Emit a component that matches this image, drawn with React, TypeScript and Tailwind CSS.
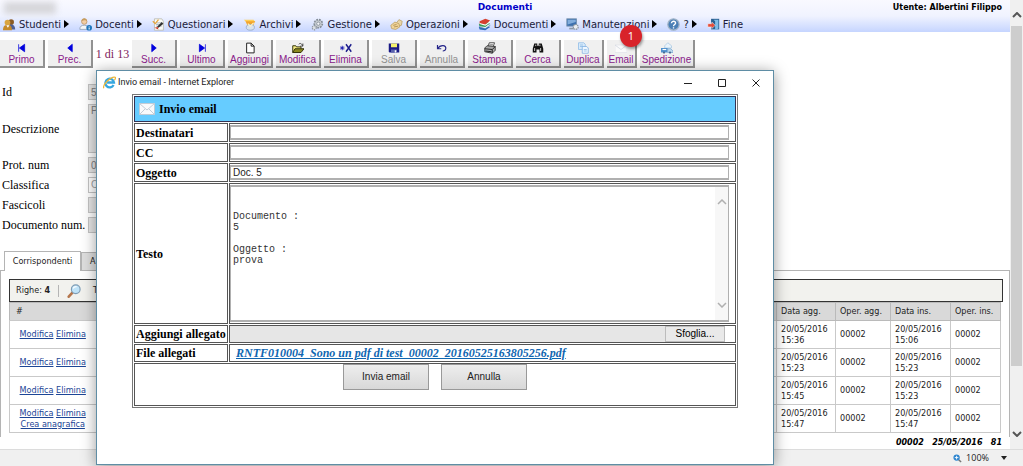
import type { ReactNode } from "react";

const menuItems: { label: string; icon: ReactNode; arrow?: boolean }[] = [
  {
    label: "Studenti",
    arrow: true,
    icon: (
      <>
        <circle cx="10" cy="5" r="3.5" fill="#8a5a24" />
        <path d="M5 14c0-5 2-6 5-6s5 2 5 6z" fill="#4d5f96" />
        <circle cx="5.500" cy="5.500" r="3.500" fill="#d9a441" />
        <path d="M0 15c0-5 2-6.500 5.500-6.500S11 10 11 15z" fill="#c58a2c" />
        <path d="M4 9l2 3 2-3z" fill="#fff" />
      </>
    ),
  },
  {
    label: "Docenti",
    arrow: true,
    icon: (
      <>
        <path d="M1 14c0-4 2-5 5.500-5s5 1 5 5z" fill="#f4f6f8" stroke="#8d9fb5" />
        <circle cx="6.500" cy="4.500" r="3.300" fill="#f3cda2" stroke="#b9946a" />
        <path d="M3 4c0-5 7-5 7 0-2-2-5-1-7 0z" fill="#c79d5e" />
        <circle cx="12.500" cy="12" r="3.500" fill="#1c75bc" />
        <path d="M12.500 10v.8M12.500 11.600V14" stroke="#fff" strokeWidth="1.300" />
      </>
    ),
  },
  {
    label: "Questionari",
    arrow: true,
    icon: (
      <>
        <path d="M3 1h9l2 3v11H3z" fill="#fbfbf6" stroke="#b8b8ae" />
        <path d="M5 6h7M5 8h6M5 10h7" stroke="#9daab9" />
        <path d="M1 4l3 3 4-5" stroke="#e6a43b" strokeWidth="1.500" fill="none" />
        <path d="M6 11l6-6 2 2-6 5z" fill="#313131" />
        <path d="M3 12l4-1 1 3z" fill="#d03928" />
      </>
    ),
  },
  {
    label: "Archivi",
    arrow: true,
    icon: (
      <>
        <path d="M1 2h12l2 3H4z" fill="#ffcf55" />
        <path d="M3 4h12l-3 6H6z" fill="#f2a52e" />
        <ellipse cx="9" cy="11.500" rx="5" ry="3.500" fill="#d9e3ef" stroke="#8fa8c5" />
        <path d="M6 7l3 3 4-4" stroke="#fff3c2" strokeWidth="1.500" fill="none" />
      </>
    ),
  },
  {
    label: "Gestione",
    arrow: true,
    icon: (
      <>
        <circle cx="9" cy="7" r="5" fill="#c6ccd2" stroke="#838c96" strokeWidth="2" strokeDasharray="2.200 1.200" />
        <circle cx="9" cy="7" r="2" fill="#f4f6fa" stroke="#838c96" />
        <circle cx="4" cy="12" r="2.500" fill="#dce0e4" stroke="#8e969f" strokeWidth="1.500" strokeDasharray="1.500 1" />
      </>
    ),
  },
  {
    label: "Operazioni",
    arrow: true,
    icon: (
      <>
        <path d="M8 6l3-4 4 2-1 5-4 1z" fill="#e8d5a8" stroke="#bca269" />
        <path d="M1 9l5-4 5 2 1 4-5 3-5-1z" fill="#f0d49a" stroke="#bfa063" />
        <path d="M4 9l4-1M5 11l5-1" stroke="#a9894a" />
      </>
    ),
  },
  {
    label: "Documenti",
    arrow: true,
    icon: (
      <>
        <path d="M1 11l8-2 6 2-6 4-7-1z" fill="#2f69b5" />
        <path d="M2 9l8-2 5 2-6 4-7-2z" fill="#eef3f9" stroke="#4a7fb8" strokeWidth=".6" />
        <path d="M1 7l9-2 5 1-6 5-7-1z" fill="#3c9b57" />
        <path d="M2 4l7-3 6 2-6 5-7-1z" fill="#d6402f" />
        <path d="M2 6l7 2 6-4v1.500L9 9.500 2 7.500z" fill="#fff" />
      </>
    ),
  },
  {
    label: "Manutenzioni",
    arrow: true,
    icon: (
      <>
        <rect x="1" y="1" width="12" height="9" fill="#3d70ae" stroke="#7892ae" />
        <path d="M2 2h10v3L2 8z" fill="#82addc" />
        <path d="M4 12h6v2H4z" fill="#8b98a5" />
        <circle cx="12" cy="11" r="3" fill="#eceff2" stroke="#8c959e" strokeWidth="1.500" strokeDasharray="1.800 .8" />
      </>
    ),
  },
  {
    label: "?",
    arrow: true,
    icon: (
      <>
        <circle cx="8" cy="8" r="7" fill="#4a7fb5" stroke="#a3b5c8" strokeWidth="1.500" />
        <path d="M5.500 6.500c0-3.500 5.500-3.300 5 0-.3 1.500-2.500 1.500-2.500 3.500M8 11.500V13" stroke="#fff" strokeWidth="1.700" fill="none" />
      </>
    ),
  },
  {
    label: "Fine",
    icon: (
      <>
        <rect x="5" y="1" width="10" height="13" fill="#2b6091" />
        <path d="M8 2h6v11l-4 2V4z" fill="#7ebde8" />
        <path d="M1 7h5V5l4 4-4 4v-2H1z" fill="#e34b37" stroke="#fff" strokeWidth=".6" />
      </>
    ),
  },
];

interface ToolButton {
  label: string;
  width: string;
  icon: ReactNode;
  disabled?: boolean;
}

const navBefore: ToolButton[] = [
  { label: "Primo", width: "w-[45px]", icon: <path d="M3.500 3v10M4.500 8l7-5v10z" fill="#00d" stroke="#00d" /> },
  { label: "Prec.", width: "w-[45px]", icon: <path d="M5 8l6-5v10z" fill="#00d" stroke="#00d" /> },
];

const navAfter: ToolButton[] = [
  { label: "Succ.", width: "w-[45px]", icon: <path d="M11 8L5 3v10z" fill="#00d" stroke="#00d" /> },
  { label: "Ultimo", width: "w-[45px]", icon: <path d="M12.500 3v10M11.500 8l-7-5v10z" fill="#00d" stroke="#00d" /> },
  {
    label: "Aggiungi",
    width: "w-[45px]",
    icon: <path d="M3.500 1.500h6l4 4v9h-10zM9.500 1.500v4h4" fill="#fff" stroke="#222" strokeWidth="1.300" />,
  },
  {
    label: "Modifica",
    width: "w-[45px]",
    icon: (
      <>
        <path d="M1 14V5h4l1 1.500h6V9" fill="#f4eb84" stroke="#333308" strokeWidth="1.300" />
        <path d="M1 14l3-5h12l-4 5z" fill="#8c8a20" stroke="#333308" strokeWidth="1.300" />
        <path d="M9 3c2-2 4-1 5 2M14.500 2v3.500H11" fill="none" stroke="#222" />
      </>
    ),
  },
  {
    label: "Elimina",
    width: "w-[45px]",
    icon: (
      <>
        <path d="M0 8h6M3 5v6M1 6l4 4M5 6l-4 4" stroke="#1a1ab0" strokeWidth="1.200" />
        <path d="M8 3l7 10M15 3L8 13" stroke="#1a1a8a" strokeWidth="1.900" />
      </>
    ),
  },
  {
    label: "Salva",
    width: "w-[45px]",
    disabled: true,
    icon: (
      <>
        <path d="M1 2h14v12H2l-1-1z" fill="#191985" />
        <path d="M4 2h8v5H4z" fill="#f2ef6d" />
        <path d="M4 10h8v4H4z" fill="#5a62ae" />
        <path d="M9 11h2v3H9z" fill="#fff" />
      </>
    ),
  },
  {
    label: "Annulla",
    width: "w-[45px]",
    disabled: true,
    icon: <path d="M2 4v5h5M2 9c4-6 12-5 11 0-.3 2-2 3-4 3" fill="none" stroke="#26268a" strokeWidth="1.600" />,
  },
  {
    label: "Stampa",
    width: "w-[45px]",
    icon: (
      <>
        <path d="M5 7l2-6h7l-2 6z" fill="#fff" stroke="#222" />
        <path d="M1 8l3-3 11 1v5l-4 4-10-2z" fill="#aaa" stroke="#222" />
        <path d="M1 9l10 1 4-4M2 12l8 1M11 10v5" fill="none" stroke="#222" strokeWidth="1.300" />
        <path d="M7 3l5 .5M6 5l6 .5" stroke="#555" strokeWidth=".8" />
      </>
    ),
  },
  {
    label: "Cerca",
    width: "w-[45px]",
    icon: (
      <>
        <path d="M3 2h4v3h2V2h4l2 7v5h-5v-4H6v4H1V9z" fill="#111" />
        <path d="M3.500 8v4M11.500 8v4M5 3.500v2M10.500 3.500v2" stroke="#fff" />
      </>
    ),
  },
  {
    label: "Duplica",
    width: "w-10",
    icon: (
      <>
        <path d="M2 1h7l2 2v7H2z" fill="#d8eafa" stroke="#8cb9e6" />
        <path d="M7 6h6l2 2v7H7z" fill="#eef7ff" stroke="#7eade0" />
        <path d="M4 4h4M4 6h4M9 10h4M9 12h4" stroke="#8cb9e6" />
      </>
    ),
  },
  {
    label: "Email",
    width: "w-[30px]",
    icon: (
      <>
        <path d="M0 4h16v10H0z" fill="#fafafa" stroke="#e1e3ea" />
        <path d="M0 4l8 6 8-6" fill="none" stroke="#d0d5df" />
      </>
    ),
  },
  {
    label: "Spedizione",
    width: "w-[55px]",
    icon: (
      <>
        <path d="M5 5l4-4 5 4v3H5z" fill="#e9f3fb" stroke="#a9c8e2" />
        <path d="M0 8h9v6H0z" fill="#4f91ce" />
        <path d="M9 9h4l3 3v2H9z" fill="#bdd9ef" stroke="#7daad0" />
        <path d="M2 10h5" stroke="#fff" strokeWidth="1.500" />
        <circle cx="4" cy="14" r="1.500" fill="#466f94" />
        <circle cx="12" cy="14" r="1.500" fill="#466f94" />
      </>
    ),
  },
];

const rows = [
  { agg: "20/05/2016 15:36", ins: "20/05/2016 15:06" },
  { agg: "20/05/2016 15:23", ins: "20/05/2016 15:23" },
  { agg: "20/05/2016 15:45", ins: "20/05/2016 15:23" },
  { agg: "20/05/2016 15:47", ins: "20/05/2016 15:47", crea: true },
];

const Toolbutton = ({ label, width, icon, disabled }: ToolButton) => (
  <button
    type="button"
    disabled={disabled}
    className={`${width} flex h-7 shrink-0 flex-col items-center justify-end whitespace-nowrap border-r-2 border-b-2 border-[#929292] bg-[#f0f0f0] pb-px text-[10px] leading-[10px] ${
      disabled ? "text-[#939393]" : "text-[#8b1a8b]"
    }`}
  >
    <svg viewBox="0 0 16 16" className="mb-px h-3 w-3" fill="none">
      {icon}
    </svg>
    {label}
  </button>
);

const Header = () => (
  <header className="h-8 bg-linear-to-b from-[#f9f9ff] via-[#f0f3ff] to-[#c6d5ff] font-['DejaVu_Sans',Verdana,sans-serif]">
    <div className="grid h-4 grid-cols-3 items-center text-[9px] font-bold">
      <span className="ml-1 h-3 w-13 bg-[#d6d6da] blur-[3px]" />
      <h1 className="text-center text-[#0000c8]">Documenti</h1>
      <span className="pr-2 text-right text-[8px]">Utente: Albertini Filippo</span>
    </div>
    <nav className="flex h-4 items-center gap-[10px] pl-[3px] text-[10px] text-[#1b1b3a]">
      {menuItems.map((item) => (
        <a key={item.label} href="#" className="flex shrink-0 items-center gap-[3px]">
          <svg viewBox="0 0 16 16" className="h-[13px] w-[13px]" fill="none">
            {item.icon}
          </svg>
          {item.label}
          {item.arrow && (
            <svg viewBox="0 0 5 8" className="h-2 w-[5px]">
              <path d="M0 0l5 4-5 4z" fill="#000" />
            </svg>
          )}
        </a>
      ))}
    </nav>
  </header>
);

const Toolbar = () => (
  <div className="mt-2 flex items-center gap-[3px] font-['Liberation_Sans',Arial,sans-serif]">
    {navBefore.map((b) => (
      <Toolbutton key={b.label} {...b} />
    ))}
    <span className="flex w-[33px] shrink-0 justify-center font-['Liberation_Serif',serif] text-xs whitespace-nowrap text-[#7d1a5a]">
      1 di 13
    </span>
    {navAfter.map((b) => (
      <Toolbutton key={b.label} {...b} />
    ))}
  </div>
);

const fieldClass =
  "w-64 border border-[#c4c4c4] bg-[#e6e6e6] px-0.5 font-['Liberation_Sans',Arial,sans-serif] text-[10px] leading-3 text-[#7d7d7d]";

const DocumentForm = () => (
  <form className="mt-4 grid grid-cols-[86px_1fr] items-center gap-y-1 pl-0.5 font-['Liberation_Serif',serif] text-xs leading-4">
    <label htmlFor="id">Id</label>
    <input id="id" readOnly defaultValue="5" className={`${fieldClass} h-4`} />
    <label htmlFor="descrizione">Descrizione</label>
    <textarea id="descrizione" readOnly defaultValue="P" className={`${fieldClass} h-[49px] resize-none`} />
    <label htmlFor="prot">Prot. num</label>
    <input id="prot" readOnly defaultValue="0" className={`${fieldClass} h-4`} />
    <label htmlFor="classifica">Classifica</label>
    <select
      id="classifica"
      className="h-4 w-64 appearance-none border border-[#c4c4c4] bg-white px-0.5 font-['Liberation_Sans',Arial,sans-serif] text-[10px] leading-3 text-[#a0a0a0]"
    >
      <option>C</option>
    </select>
    <label htmlFor="fascicoli">Fascicoli</label>
    <input id="fascicoli" readOnly className={`${fieldClass} h-4`} />
    <label htmlFor="docnum">Documento num.</label>
    <input id="docnum" readOnly className={`${fieldClass} h-4`} />
  </form>
);

const Correspondents = () => (
  <section className="mt-[18px] font-['DejaVu_Sans_Condensed',Tahoma,'Noto_Sans',sans-serif] text-[9px] leading-[11px] text-[#222]">
    <div className="flex items-end pl-1">
      <button type="button" className="relative -mb-px h-5 w-[77px] border border-b-0 border-[#b4b4b4] bg-white">
        Corrispondenti
      </button>
      <button type="button" className="h-[18px] w-[77px] border border-b-0 border-[#b4b4b4] bg-[#dedede] pl-2 text-left">
        A
      </button>
    </div>
    <div className="border border-b-0 border-[#b4b4b4] px-2 pt-2 pb-1">
      <div className="mr-[-2px] flex h-[23px] items-center border border-[#333] bg-[#f2f2ee] pl-1.5">
        <span>
          Righe: <b>4</b>
        </span>
        <span className="ml-2 h-3 w-px bg-[#b5b5b5]" />
        <svg viewBox="0 0 16 16" className="ml-2 h-[14px] w-[14px]" fill="none">
          <path d="M7 9l-5 5.500" stroke="#b5764c" strokeWidth="3" strokeLinecap="round" />
          <circle cx="10" cy="6" r="5" fill="#bfe3f8" stroke="#7e9cb4" strokeWidth="1.300" />
          <path d="M7 5c1-2 3-2 4-2" stroke="#fff" strokeWidth="1.300" />
        </svg>
        <span className="ml-3">T</span>
      </div>
      <table className="w-full table-fixed border-collapse border border-[#b8b8b8]">
        <thead>
          <tr className="h-[18px] bg-[#d9d9d9] text-left">
            <th className="w-[86px] pl-1.5 font-normal">#</th>
            <th />
            <th className="w-[59px] border border-[#bababa] pl-1 font-normal">Data agg.</th>
            <th className="w-[55px] border border-[#bababa] pl-1 font-normal">Oper. agg.</th>
            <th className="w-[60px] border border-[#bababa] pl-1 font-normal">Data ins.</th>
            <th className="w-[50px] border border-[#bababa] pl-1 font-normal whitespace-nowrap">Oper. ins.</th>
          </tr>
        </thead>
        <tbody>
          {rows.map((row) => (
            <tr key={row.agg} className="h-7 border border-[#c9c9c9]">
              <td className="text-center text-[#1c4596]">
                <a href="#" className="underline">Modifica</a>{" "}
                <a href="#" className="underline">Elimina</a>
                {row.crea && (
                  <a href="#" className="block underline">Crea anagrafica</a>
                )}
              </td>
              <td />
              <td className="border border-[#c9c9c9] pl-1">{row.agg}</td>
              <td className="border border-[#c9c9c9] pl-1">00002</td>
              <td className="border border-[#c9c9c9] pl-1">{row.ins}</td>
              <td className="border border-[#c9c9c9] pl-1">00002</td>
            </tr>
          ))}
        </tbody>
      </table>
    </div>
  </section>
);

const labelCell = "w-[94px] border border-[#555] px-px text-left align-middle font-bold whitespace-nowrap";
const valueCell = "border border-[#555] py-px pr-1.5";
const mailInput =
  "block h-[15px] w-full border border-y-2 border-[#b0b0b0] bg-white px-0.5 font-['Liberation_Sans',Arial,sans-serif] text-[10px] leading-[11px] text-[#222]";

const message = "\n\nDocumento :\n5\n\nOggetto :\nprova";

const EmailWindow = () => (
  <div
    role="dialog"
    aria-label="Invio email"
    className="absolute top-[70px] right-[249px] bottom-px left-24 border border-[#5f8da5] bg-white shadow-[0_2px_14px_rgba(0,0,0,0.4)]"
  >
    <div className="flex h-[23px] items-center pl-1.5">
      <svg viewBox="0 0 16 16" className="h-[13px] w-[13px]" fill="none">
        <path d="M13 11a5.300 5.300 0 1 1 .5-3H5" stroke="#36a7df" strokeWidth="2.800" />
        <path d="M1 15C-1 11 10 0 15 1.500c1 .7 0 2.500-1 3.500" stroke="#edb63a" strokeWidth="1.500" />
      </svg>
      <span className="ml-0.5 font-[Roboto,'Segoe_UI',sans-serif] text-[9px] text-[#222]">
        Invio email - Internet Explorer
      </span>
      <div className="mr-3 ml-auto flex gap-6">
        <button type="button" aria-label="Minimize">
          <svg viewBox="0 0 10 10" className="h-[10px] w-[10px]"><path d="M1 5.500h8" stroke="#222" /></svg>
        </button>
        <button type="button" aria-label="Maximize">
          <svg viewBox="0 0 10 10" className="h-[10px] w-[10px]"><path d="M1.500 1.500h7v7h-7z" fill="none" stroke="#222" /></svg>
        </button>
        <button type="button" aria-label="Close">
          <svg viewBox="0 0 10 10" className="h-[10px] w-[10px]"><path d="M1.500 1.500l7 7M8.500 1.500l-7 7" stroke="#222" /></svg>
        </button>
      </div>
    </div>
    <form className="px-[35px] font-['Liberation_Serif',serif] text-xs leading-[14px] text-black">
      <table className="w-full border-separate border-spacing-px border border-[#777]">
        <thead>
          <tr>
            <th colSpan={2} className="h-[26px] border border-[#335] bg-[#66ccff] px-1 text-left">
              <span className="flex items-center gap-1">
                <svg viewBox="0 0 16 12" className="h-3 w-4" fill="none">
                  <path d="M.5.500h15v11H.5z" fill="#f8fafc" stroke="#c2ccd6" />
                  <path d="M.5.500L8 7 15.500.500M.5 11.500L6 6M15.500 11.500L10 6" stroke="#c2ccd6" />
                </svg>
                Invio email
              </span>
            </th>
          </tr>
        </thead>
        <tbody>
          <tr>
            <th className={labelCell}><label htmlFor="to">Destinatari</label></th>
            <td className={valueCell}><input id="to" className={mailInput} /></td>
          </tr>
          <tr>
            <th className={labelCell}><label htmlFor="cc">CC</label></th>
            <td className={valueCell}><input id="cc" className={mailInput} /></td>
          </tr>
          <tr>
            <th className={labelCell}><label htmlFor="subject">Oggetto</label></th>
            <td className={valueCell}><input id="subject" defaultValue="Doc. 5" className={mailInput} /></td>
          </tr>
          <tr>
            <th className={labelCell}><label htmlFor="body">Testo</label></th>
            <td className={valueCell}>
              <div className="flex h-[137px] border border-y-2 border-[#b0b0b0]">
                <textarea
                  id="body"
                  defaultValue={message}
                  className="flex-1 resize-none overflow-hidden px-0.5 pt-0.5 font-['Liberation_Mono',monospace] text-[10px] leading-[11px] text-[#333]"
                />
                <div className="flex w-[13px] flex-col items-center justify-between bg-[#f7f7f7] py-3">
                  <svg viewBox="0 0 10 6" className="h-[6px] w-[10px]"><path d="M1 5l4-4 4 4" fill="none" stroke="#b0b0b0" strokeWidth="1.500" /></svg>
                  <svg viewBox="0 0 10 6" className="h-[6px] w-[10px]"><path d="M1 1l4 4 4-4" fill="none" stroke="#b0b0b0" strokeWidth="1.500" /></svg>
                </div>
              </div>
            </td>
          </tr>
          <tr>
            <th className={labelCell}>Aggiungi allegato</th>
            <td className="border border-[#555] pr-2.5">
              <div className="flex h-4 justify-end bg-[#e6e6e6]">
                <button type="button" className="w-[60px] border border-[#bcbcbc] bg-[#e9e9e9] font-['Liberation_Sans',Arial,sans-serif] text-[10px] leading-3">
                  Sfoglia...
                </button>
              </div>
            </td>
          </tr>
          <tr>
            <th className={labelCell}>File allegati</th>
            <td className="h-[18px] border border-[#555] pl-1.5">
              <a href="#" className="block font-bold text-[#0f66b0] italic underline">
                RNTF010004_Sono un pdf di test_00002_20160525163805256.pdf
              </a>
            </td>
          </tr>
          <tr>
            <td colSpan={2} className="h-[43px] border border-[#555] align-top">
              <div className="flex justify-center gap-3 font-['Liberation_Sans',Arial,sans-serif] text-[10px] text-[#222]">
                <button type="button" className="h-[26px] w-[86px] border border-[#999] bg-linear-to-b from-[#eee] to-[#d8d8d8]">
                  Invia email
                </button>
                <button type="button" className="h-[26px] w-[86px] border border-[#999] bg-linear-to-b from-[#eee] to-[#d8d8d8]">
                  Annulla
                </button>
              </div>
            </td>
          </tr>
        </tbody>
      </table>
    </form>
  </div>
);

export default function App() {
  return (
    <div className="relative flex min-h-screen flex-col overflow-hidden bg-white text-black">
      <div className="flex flex-1">
        <main className="min-w-0 flex-1">
          <Header />
          <Toolbar />
          <DocumentForm />
          <Correspondents />
          <p className="pr-2 text-right font-['DejaVu_Sans',Verdana,sans-serif] text-[8px] leading-3 font-bold whitespace-pre italic">
            {"00002   25/05/2016   81"}
          </p>
        </main>
        <div className="flex w-[13px] flex-col items-center bg-[#f0f0f0] pt-3 pb-3">
          <svg viewBox="0 0 10 6" className="h-[6px] w-[10px]"><path d="M1 5l4-4 4 4" fill="none" stroke="#555" strokeWidth="2" /></svg>
          <div className="mt-2 h-[340px] w-[11px] bg-[#cdcdcd]" />
          <svg viewBox="0 0 10 6" className="mt-auto h-[6px] w-[10px]"><path d="M1 1l4 4 4-4" fill="none" stroke="#555" strokeWidth="2" /></svg>
        </div>
      </div>
      <footer className="flex h-[17px] items-center justify-end gap-1 border-t border-[#dcdcdc] bg-[#f0f0f0] pr-4 font-['Open_Sans','Segoe_UI',sans-serif] text-[9px] text-[#222]">
        <svg viewBox="0 0 10 10" className="h-[9px] w-[9px]" fill="none">
          <path d="M6 6l3 3" stroke="#777" strokeWidth="1.600" />
          <circle cx="4" cy="4" r="3.500" fill="#2f86cf" />
          <path d="M2 4h4M4 2v4" stroke="#fff" />
        </svg>
        100%
        <svg viewBox="0 0 6 4" className="ml-2 h-1 w-1.5"><path d="M0 0h6L3 4z" fill="#222" /></svg>
      </footer>
      <EmailWindow />
      <span className="absolute top-[25px] left-[620px] flex h-[22px] w-[22px] items-center justify-center rounded-full bg-[#d8232a] font-['Open_Sans',sans-serif] text-[11px] leading-3 text-white shadow-[1px_2px_3px_rgba(0,0,0,0.4)]">
        1
      </span>
    </div>
  );
}
